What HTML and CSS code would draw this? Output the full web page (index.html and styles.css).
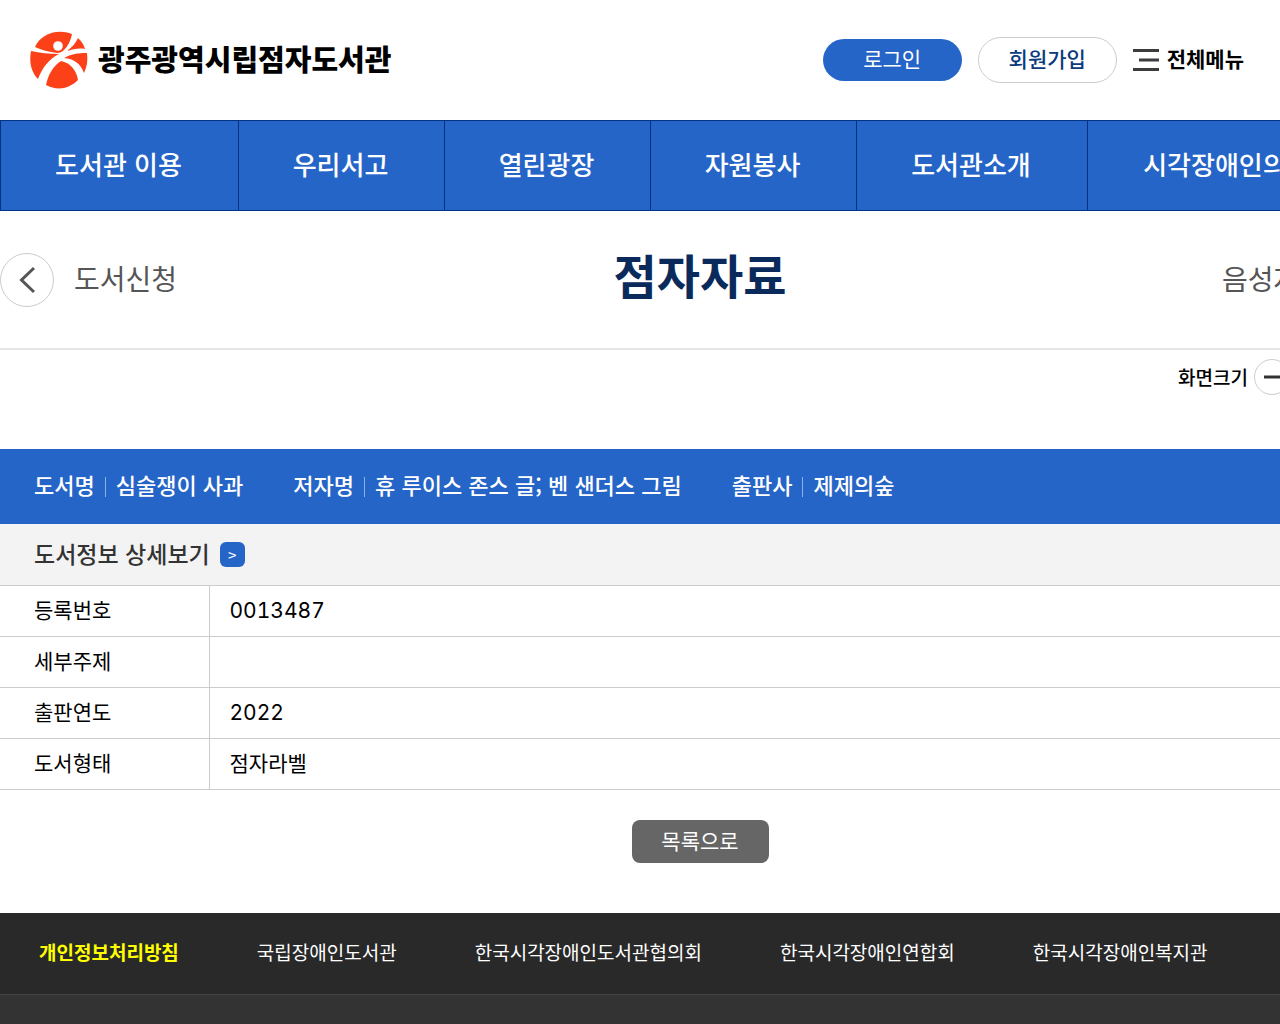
FILE: index.html
```
<!DOCTYPE html>
<html lang="ko">

<head>
    <meta charset="UTF-8" />
    <meta name="viewport" content="width=device-width, initial-scale=1.0" />
    <title>점자자료</title>
    <link rel="stylesheet" href="styles.css">
</head>

<body>
    <header class="header">
        <a href="#" class="logo">
            <svg width="58" height="58" viewBox="0 0 58 58" aria-hidden="true">
                <g fill="#fc4119">
                    <path d="M5 16 C10 4 26 -3 42 3 C41 9 38 15 34 19 C32 21 30 22 27 22 C19 21 11 19 5 16 Z" />
                    <path d="M48 7 C52 11 54 14 55 18 C49 17 43 18 37 20 C42 16 46 12 48 7 Z" />
                    <path d="M1 20 C10 22 19 23 29 23 C19 28 12 37 8 48 C1 41 -1 31 1 20 Z" />
                    <path d="M57 22 C58 29 57 36 54 42 C50 32 44 28 34 27 C41 23 48 22 57 22 Z" />
                    <path d="M16 54 C18 44 23 35 31 30 C40 32 46 38 48 49 C39 58 27 60 16 54 Z" />
                </g>
                <circle cx="28" cy="15" r="4.800" fill="#fff" />
            </svg>
            <span class="logo-text">광주광역시립점자도서관</span>
        </a>
        <div class="member">
            <a href="#" class="login">로그인</a>
            <a href="#" class="join">회원가입</a>
            <button type="button" class="all-menu">
                <svg width="26" height="22" viewBox="0 0 26 22" aria-hidden="true">
                    <path d="M0 1.500H26M6 11H26M0 20.500H26" stroke="#3c3c3c" stroke-width="3" />
                </svg>
                <span>전체메뉴</span>
            </button>
        </div>
    </header>

    <nav class="gnb">
        <a href="#">도서관 이용</a>
        <a href="#">우리서고</a>
        <a href="#">열린광장</a>
        <a href="#">자원봉사</a>
        <a href="#">도서관소개</a>
        <a href="#">시각장애인의 이해</a>
    </nav>

    <main class="content">
        <div class="page-title">
            <a href="#" class="prev">
                <span class="circle">
                    <svg width="52" height="52" viewBox="0 0 52 52" aria-hidden="true">
                        <path d="M33 14L20.500 26L33 38" fill="none" stroke="#555" stroke-width="3" />
                    </svg>
                </span>
                <span class="label">도서신청</span>
            </a>
            <h1>점자자료</h1>
            <a href="#" class="next label">음성자료</a>
        </div>

        <div class="zoom">
            <span>화면크기</span>
            <button type="button" class="zoom-btn" aria-label="축소">
                <svg width="34" height="34" viewBox="0 0 34 34" aria-hidden="true">
                    <path d="M9 17H25" stroke="#333" stroke-width="3" />
                </svg>
            </button>
        </div>

        <ul class="book">
            <li>도서명<i></i>심술쟁이 사과</li>
            <li>저자명<i></i>휴 루이스 존스 글; 벤 샌더스 그림</li>
            <li>출판사<i></i>제제의숲</li>
        </ul>

        <div class="detail-title">
            <h2>도서정보 상세보기</h2>
            <button type="button" aria-label="상세보기">&gt;</button>
        </div>

        <table class="detail">
            <tr>
                <th scope="row">등록번호</th>
                <td class="num">0013487</td>
            </tr>
            <tr>
                <th scope="row">세부주제</th>
                <td></td>
            </tr>
            <tr>
                <th scope="row">출판연도</th>
                <td class="num">2022</td>
            </tr>
            <tr>
                <th scope="row">도서형태</th>
                <td>점자라벨</td>
            </tr>
        </table>

        <div class="btn-wrap">
            <button type="button" class="btn-list">목록으로</button>
        </div>
    </main>

    <footer class="footer">
        <div class="footer-links">
            <a href="#" class="privacy">개인정보처리방침</a>
            <a href="#">국립장애인도서관</a>
            <a href="#">한국시각장애인도서관협의회</a>
            <a href="#">한국시각장애인연합회</a>
            <a href="#">한국시각장애인복지관</a>
        </div>
    </footer>
</body>

</html>
```
FILE: styles.css
```
* {
    box-sizing: border-box;
    margin: 0;
    padding: 0;
}

html {
    overflow-x: hidden;
}

body {
    display: flex;
    flex-direction: column;
    min-height: 100vh;
    overflow-x: hidden;
    font-family: "Noto Sans CJK KR", sans-serif;
    color: #000;
    background: #fff;
}

a {
    color: inherit;
    text-decoration: none;
}

button {
    font-family: inherit;
    border: 0;
    cursor: pointer;
}

ul {
    list-style: none;
}

/* 상단 */
.header {
    display: flex;
    align-items: center;
    justify-content: space-between;
    height: 120px;
    padding: 0 36px 0 30px;
}

.logo {
    display: flex;
    align-items: center;
    gap: 10px;
}

.logo-text {
    padding-bottom: 4px;
    font-size: 29px;
    font-weight: 900;
}

.member {
    display: flex;
    align-items: center;
    gap: 16px;
    font-size: 21px;
}

.login,
.join {
    width: 139px;
    height: 42px;
    line-height: 38px;
    border-radius: 23px;
    text-align: center;
}

.login {
    background: #2565c7;
    color: #fff;
}

.join {
    height: 46px;
    line-height: 41px;
    border: 1px solid #ccc;
    color: #0b3b7c;
    font-weight: 500;
}

.all-menu {
    display: flex;
    align-items: center;
    gap: 8px;
    background: none;
    color: #000;
    font-size: 21px;
    font-weight: 700;
}

.all-menu span {
    padding-bottom: 4px;
}

/* 메인 메뉴 */
.gnb {
    display: grid;
    grid-template-columns: 238px repeat(3, 206px) 231px 312px;
    width: 1400px;
    border: 1px solid #023286;
    border-right: 0;
    background: #2565c7;
}

.gnb a {
    height: 89px;
    padding-right: 2px;
    line-height: 85px;
    border-right: 1px solid #023286;
    color: #fff;
    font-size: 26px;
    font-weight: 500;
    text-align: center;
    white-space: nowrap;
}

/* 본문 */
.content {
    min-width: 1400px;
}

.page-title {
    display: grid;
    grid-template-columns: 1fr auto 1fr;
    align-items: center;
    height: 139px;
    border-bottom: 2px solid #e5e5e5;
    color: #555;
    font-size: 28px;
}

.label {
    padding-bottom: 4px;
}

.prev {
    display: flex;
    align-items: center;
    gap: 20px;
}

.circle {
    display: flex;
    width: 54px;
    height: 54px;
    border: 1px solid #ccc;
    border-radius: 50%;
}

.page-title h1 {
    padding-bottom: 12px;
    color: #0b2a5c;
    font-size: 47px;
    line-height: 60px;
}

.next {
    justify-self: end;
    padding-right: 75px;
}

.zoom {
    display: flex;
    justify-content: flex-end;
    gap: 6px;
    height: 99px;
    padding: 9px 110px 0 0;
    font-size: 19px;
    font-weight: 500;
    line-height: 35px;
}

.zoom-btn {
    display: flex;
    width: 36px;
    height: 36px;
    border: 1px solid #ccc;
    border-radius: 50%;
    background: #fff;
}

.book {
    display: flex;
    gap: 50px;
    height: 75px;
    padding: 0 34px;
    background: #2565c7;
    color: #fff;
    font-size: 22px;
    font-weight: 500;
    line-height: 71px;
}

.book i {
    display: inline-block;
    width: 1px;
    height: 20px;
    margin: 0 10px;
    background: #8fb0e6;
    vertical-align: -3px;
}

.detail-title {
    display: flex;
    align-items: center;
    gap: 10px;
    height: 61px;
    padding-left: 34px;
    background: #f3f3f3;
    color: #333;
}

.detail-title h2 {
    padding-bottom: 4px;
    font-size: 23px;
    font-weight: 500;
}

.detail-title button {
    width: 25px;
    height: 25px;
    border-radius: 6px;
    background: #2565c7;
    color: #fff;
    font-size: 15px;
    line-height: 22px;
}

.detail {
    width: 100%;
    border-collapse: collapse;
    border-top: 1px solid #ccc;
    font-size: 21px;
    line-height: 46px;
}

.detail th,
.detail td {
    height: 51px;
    padding-bottom: 4px;
    border-bottom: 1px solid #ccc;
    text-align: left;
    font-weight: 400;
}

.detail th {
    width: 209px;
    padding-left: 34px;
    border-right: 1px solid #ccc;
}

.detail td {
    padding-left: 20px;
}

.detail .num {
    padding-bottom: 0;
    font-family: Inter, "Noto Sans CJK KR", sans-serif;
    font-variant-numeric: tabular-nums;
}

.btn-wrap {
    padding: 30px 0 50px;
    text-align: center;
}

.btn-list {
    display: inline-block;
    width: 137px;
    height: 43px;
    padding-bottom: 4px;
    border-radius: 8px;
    background: #666;
    color: #fff;
    font-size: 21px;
    line-height: 38px;
    vertical-align: top;
}

/* 하단 */
.footer {
    flex: 1;
    background: #333;
}

.footer-links {
    display: flex;
    gap: 78px;
    height: 82px;
    padding-left: 39px;
    border-bottom: 1px solid #444;
    background: #292929;
    color: #fff;
    font-size: 19px;
    line-height: 78px;
    white-space: nowrap;
}

.privacy {
    color: #ff0;
    font-weight: 700;
}
```
